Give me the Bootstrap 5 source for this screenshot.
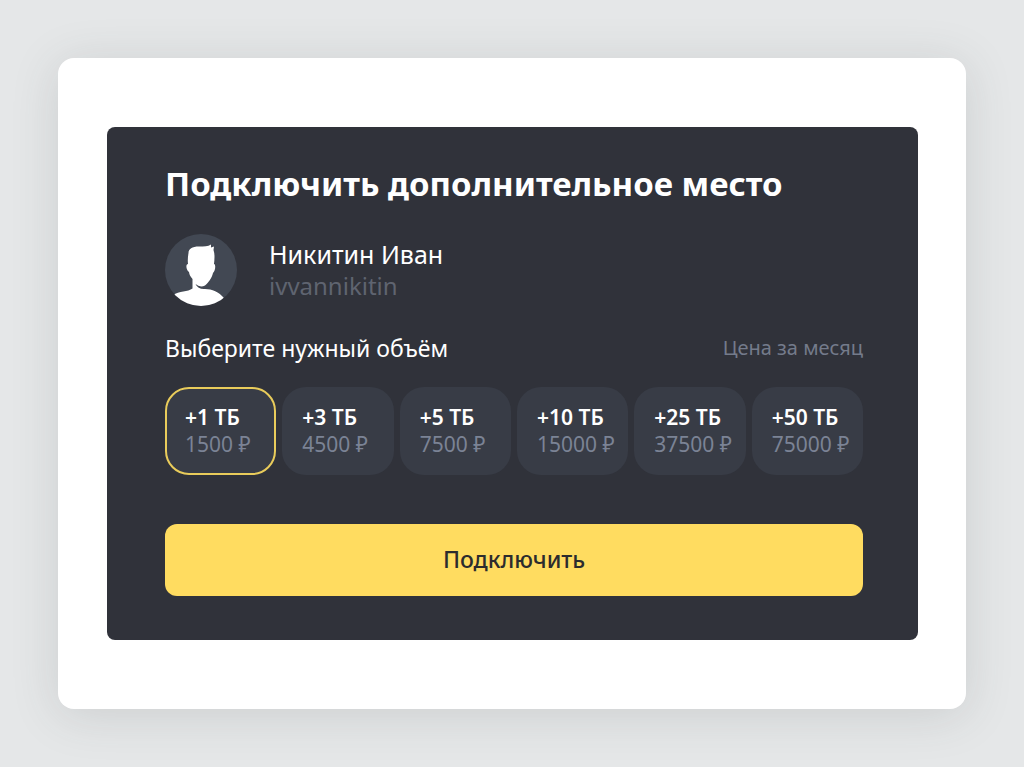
<!DOCTYPE html>
<html lang="ru">
<head>
<meta charset="utf-8">
<meta name="viewport" content="width=device-width, initial-scale=1">
<title>Подключить дополнительное место</title>
<link href="https://cdn.jsdelivr.net/npm/bootstrap@5.3.0/dist/css/bootstrap.min.css" rel="stylesheet">
<style>
body { background: #e5e7e8; font-family: "Noto Sans", sans-serif; }
.page { padding: 58px; }
.sheet { background: #fff; border-radius: 16px; padding: 69px 48px 69px 49px; box-shadow: 0 6px 48px rgba(60, 66, 66, .15); }
.panel { background: #30323a; color: #fff; border-radius: 8px; padding: 35px 55px 44px 58px; }
.title { font-size: 33px; line-height: 44px; font-weight: 700; margin-bottom: 28px; }
.user { gap: 32px; margin-bottom: 26px; }
.user-name, .user-login { line-height: 32px; }
.user-name { font-size: 25px; }
.user-login { font-size: 24px; color: #5f6470; }
.choose { font-size: 23px; line-height: 32px; }
.per { font-size: 20px; line-height: 32px; color: #747b8b; }
.plans { gap: 6px; margin: 23px 0 49px; }
.plan { flex: 1 1 0; min-width: 104px; height: 88px; padding: 15px 0 0 18px; border: 2px solid transparent; border-radius: 24px; background: #383c46 border-box; font-size: 21px; line-height: 27px; cursor: pointer; white-space: nowrap; }
.plan strong { font-weight: 600; }
.plan span { color: #7b8395; }
.btn-check:checked + .plan { border-color: #e9cc5b; }
.btn-connect { background: #ffdc60; color: #2c2c2e; border: 0; border-radius: 12px; font-size: 23px; line-height: 32px; font-weight: 500; padding: 19px 0 21px; }
.btn-connect:hover { background: #ffd43d; }
</style>
</head>
<body>
<main class="page">
  <div class="sheet">
    <form class="panel">
      <h1 class="title">Подключить дополнительное место</h1>
      <div class="user d-flex align-items-center">
        <svg width="72" height="72" viewBox="0 0 72 72" class="flex-shrink-0" aria-hidden="true">
          <defs><clipPath id="round"><circle cx="36" cy="36" r="36"/></clipPath></defs>
          <g clip-path="url(#round)">
            <rect width="72" height="72" fill="#424853"/>
            <path fill="#fff" d="M23.500 19C23.500 15 27 12.500 34 12.500C39 12.500 43 12.500 46 10.500L46 13.500L49 12.500L48.500 16C50 20 49.500 25 49 30C51 30 50.500 37 48 39C47 44 43 49 40 51.500Q35 54 30.500 50Q33 55.500 40 55C47 55 54 58 59 64L60 76H4L8 61C14 57 23 58 27.500 54.500V45C25 42 24.500 41 24 38C21 36 20.500 30 23 30C22.500 26 23 22 23.500 19Z"/>
          </g>
        </svg>
        <div>
          <div class="user-name">Никитин Иван</div>
          <div class="user-login">ivvannikitin</div>
        </div>
      </div>
      <div class="d-flex justify-content-between">
        <div class="choose" id="choose">Выберите нужный объём</div>
        <div class="per">Цена за месяц</div>
      </div>
      <div class="plans d-flex flex-wrap" role="radiogroup" aria-labelledby="choose">
        <input class="btn-check" type="radio" name="plan" id="p1" checked>
        <label class="plan" for="p1"><strong class="d-block">+1 ТБ</strong><span class="d-block">1500 ₽</span></label>
        <input class="btn-check" type="radio" name="plan" id="p3">
        <label class="plan" for="p3"><strong class="d-block">+3 ТБ</strong><span class="d-block">4500 ₽</span></label>
        <input class="btn-check" type="radio" name="plan" id="p5">
        <label class="plan" for="p5"><strong class="d-block">+5 ТБ</strong><span class="d-block">7500 ₽</span></label>
        <input class="btn-check" type="radio" name="plan" id="p10">
        <label class="plan" for="p10"><strong class="d-block">+10 ТБ</strong><span class="d-block">15000 ₽</span></label>
        <input class="btn-check" type="radio" name="plan" id="p25">
        <label class="plan" for="p25"><strong class="d-block">+25 ТБ</strong><span class="d-block">37500 ₽</span></label>
        <input class="btn-check" type="radio" name="plan" id="p50">
        <label class="plan" for="p50"><strong class="d-block">+50 ТБ</strong><span class="d-block">75000 ₽</span></label>
      </div>
      <button type="submit" class="btn btn-connect w-100">Подключить</button>
    </form>
  </div>
</main>
<script src="https://cdn.jsdelivr.net/npm/bootstrap@5.3.0/dist/js/bootstrap.bundle.min.js"></script>
</body>
</html>
